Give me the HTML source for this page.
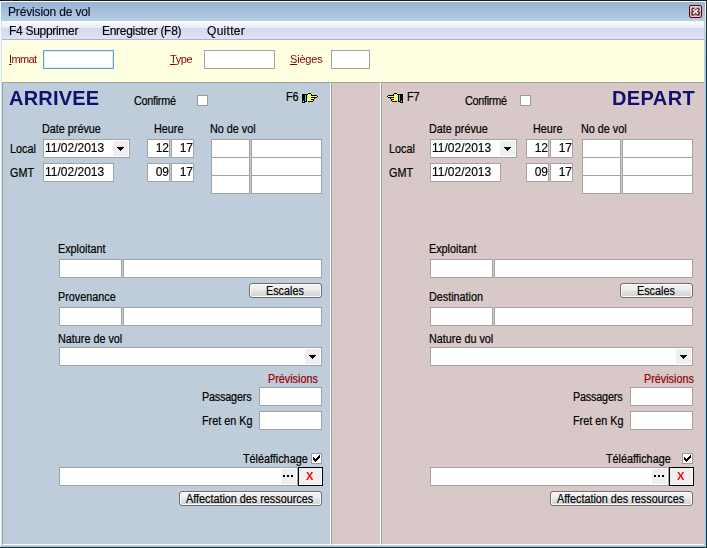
<!DOCTYPE html>
<html><head><meta charset="utf-8">
<style>
*{margin:0;padding:0;box-sizing:border-box}
html,body{width:707px;height:548px;overflow:hidden;background:#fff}
body{position:relative;font-family:"Liberation Sans",sans-serif;font-size:11px;color:#000}
.a{position:absolute}
.t{position:absolute;white-space:nowrap;font-size:11px;line-height:13px;transform:translateZ(0)}
.L{font-size:12px;transform:scaleX(0.9);transform-origin:0 0;-webkit-text-stroke:0.2px currentColor}
.bx{position:absolute;background:#fff;border:1px solid #a3a3a3}
.cb{position:absolute;background:#fff;border:1px solid #9c9c9c;width:11px;height:11px}
.btn{position:absolute;border:1px solid #707070;border-radius:3px;background:linear-gradient(#f4f4f4 0%,#eeeeee 42%,#e0e0e0 58%,#d2d2d2 100%);box-shadow:inset 0 0 0 1px #fcfcfc}
.dd{position:absolute;background:#efefef}
.arr{position:absolute;width:0;height:0;border-left:4px solid transparent;border-right:4px solid transparent;border-top:4px solid #000}
.red{color:#800000}
.u{text-decoration:underline}
</style></head><body>
<div class="a" style="left:0;top:0;width:707px;height:1px;background:#1b1b1b"></div>
<div class="a" style="left:0;top:1px;width:706px;height:1px;background:#ffffff"></div>
<div class="a" style="left:0;top:1px;width:1px;height:546px;background:#f4fbff"></div>
<div class="a" style="left:1px;top:21px;width:1px;height:525px;background:#d4e0ec"></div>
<div class="a" style="left:704px;top:21px;width:1px;height:525px;background:#c4cce4"></div>
<div class="a" style="left:705px;top:2px;width:1px;height:545px;background:linear-gradient(#e8f8ff,#70d8f8 10%,#70d8f8)"></div>
<div class="a" style="left:706px;top:0;width:1px;height:548px;background:#2e2826"></div>
<div class="a" style="left:1px;top:545px;width:704px;height:1px;background:#c4cce4"></div>
<div class="a" style="left:0;top:546px;width:706px;height:1px;background:#70d8f8"></div>
<div class="a" style="left:0;top:547px;width:707px;height:1px;background:#2e2826"></div>
<div class="a" style="left:1px;top:2px;width:704px;height:19px;background:linear-gradient(#97b3d1,#b6cee6)"></div>
<div class="t" style="left:8px;top:6px;font-size:12px;letter-spacing:-0.15px;color:#0a0a20;-webkit-text-stroke:0.15px #0a0a20">Prévision de vol</div>
<div class="a" style="left:689px;top:5px;width:13px;height:13px;border:1px solid #4a0c1c;border-radius:2px;background:linear-gradient(#f4c4b4 0%,#e8a090 45%,#cc4c2c 50%,#d86848 75%,#eca898 100%);box-shadow:inset 0 0 0 1px rgba(255,220,210,0.6)"></div>
<svg class="a" style="left:689px;top:5px" width="13" height="13"><path d="M4.0 4.3 L9.0 8.9 M9.0 4.3 L4.0 8.9" stroke="#2c3444" stroke-width="2.9" stroke-linecap="square"/><path d="M4.0 4.3 L9.0 8.9 M9.0 4.3 L4.0 8.9" stroke="#fff" stroke-width="1.5"/></svg>
<div class="a" style="left:2px;top:21px;width:702px;height:19px;background:linear-gradient(#ffffff 0px,#e8eaf6 7px,#d3d8ee 7px,#dfe3f5 18px);border-bottom:1px solid #b0b4c4"></div>
<div class="t" style="left:9px;top:25px;font-size:12px;letter-spacing:-0.3px;-webkit-text-stroke:0.15px #000">F4 Supprimer</div>
<div class="t" style="left:102px;top:25px;font-size:12px;letter-spacing:-0.3px;-webkit-text-stroke:0.15px #000">Enregistrer (F8)</div>
<div class="t" style="left:207px;top:25px;font-size:12px;letter-spacing:0.3px;-webkit-text-stroke:0.15px #000">Quitter</div>
<div class="a" style="left:2px;top:40px;width:702px;height:42px;background:#ffffe1"></div>
<div class="a" style="left:2px;top:40px;width:702px;height:1px;background:#fafaf2"></div>
<div class="t red" style="left:9px;top:53px;font-size:11px;letter-spacing:-0.6px"><span class="u">I</span>mmat</div>
<div class="bx" style="left:43px;top:50px;width:71px;height:19px;border-color:#6a9acf;box-shadow:inset 0 0 0 1px #d2f0fc"></div>
<div class="t red" style="left:170px;top:53px;font-size:11px;letter-spacing:-0.4px"><span class="u">T</span>ype</div>
<div class="bx" style="left:204px;top:50px;width:71px;height:19px;"></div>
<div class="t red" style="left:290px;top:53px;font-size:11px;letter-spacing:-0.2px"><span class="u">S</span>ièges</div>
<div class="bx" style="left:331px;top:50px;width:39px;height:19px;"></div>
<div class="a" style="left:2px;top:82px;width:329px;height:463px;background:#bfccd9;border-left:1px solid #a0a0a0;border-top:1px solid #a0a0a0;border-right:1px solid #fff;border-bottom:1px solid #fff"></div>
<div class="a" style="left:331px;top:82px;width:50px;height:463px;background:#d8c8c8;border-left:1px solid #a0a0a0;border-top:1px solid #a0a0a0;border-right:1px solid #fff;border-bottom:1px solid #fff"></div>
<div class="a" style="left:381px;top:82px;width:323px;height:463px;background:#d8c8c8;border-left:1px solid #a0a0a0;border-top:1px solid #a0a0a0;border-bottom:1px solid #fff"></div>
<div class="t" style="left:9px;top:86px;font-size:20px;line-height:24px;font-weight:bold;color:#101070;letter-spacing:0.2px">ARRIVEE</div>
<div class="t L" style="left:134px;top:95px;letter-spacing:-0.3px">Confirmé</div>
<div class="cb" style="left:197px;top:95px"></div>
<div class="t L" style="left:286px;top:91px;">F6</div>
<svg class="a" style="left:302px;top:93px" width="16" height="10" shape-rendering="crispEdges"><rect x="6" y="0" width="1" height="1" fill="#000"/><rect x="7" y="0" width="1" height="1" fill="#000"/><rect x="8" y="0" width="1" height="1" fill="#000"/><rect x="0" y="1" width="1" height="1" fill="#000"/><rect x="1" y="1" width="1" height="1" fill="#000"/><rect x="2" y="1" width="1" height="1" fill="#000"/><rect x="3" y="1" width="1" height="1" fill="#000"/><rect x="4" y="1" width="1" height="1" fill="#000"/><rect x="5" y="1" width="1" height="1" fill="#000"/><rect x="6" y="1" width="1" height="1" fill="#ff0"/><rect x="7" y="1" width="1" height="1" fill="#ff0"/><rect x="8" y="1" width="1" height="1" fill="#ff0"/><rect x="9" y="1" width="1" height="1" fill="#000"/><rect x="0" y="2" width="1" height="1" fill="#000"/><rect x="1" y="2" width="1" height="1" fill="#000"/><rect x="2" y="2" width="1" height="1" fill="#000"/><rect x="3" y="2" width="1" height="1" fill="#00e8e8"/><rect x="4" y="2" width="1" height="1" fill="#000"/><rect x="5" y="2" width="1" height="1" fill="#ff0"/><rect x="6" y="2" width="1" height="1" fill="#fff"/><rect x="7" y="2" width="1" height="1" fill="#ff0"/><rect x="8" y="2" width="1" height="1" fill="#fff"/><rect x="9" y="2" width="1" height="1" fill="#000"/><rect x="10" y="2" width="1" height="1" fill="#000"/><rect x="11" y="2" width="1" height="1" fill="#000"/><rect x="12" y="2" width="1" height="1" fill="#000"/><rect x="13" y="2" width="1" height="1" fill="#000"/><rect x="14" y="2" width="1" height="1" fill="#000"/><rect x="0" y="3" width="1" height="1" fill="#000"/><rect x="1" y="3" width="1" height="1" fill="#000"/><rect x="2" y="3" width="1" height="1" fill="#000"/><rect x="3" y="3" width="1" height="1" fill="#00e8e8"/><rect x="4" y="3" width="1" height="1" fill="#000"/><rect x="5" y="3" width="1" height="1" fill="#ff0"/><rect x="6" y="3" width="1" height="1" fill="#ff0"/><rect x="7" y="3" width="1" height="1" fill="#fff"/><rect x="8" y="3" width="1" height="1" fill="#ff0"/><rect x="9" y="3" width="1" height="1" fill="#fff"/><rect x="10" y="3" width="1" height="1" fill="#ff0"/><rect x="11" y="3" width="1" height="1" fill="#fff"/><rect x="12" y="3" width="1" height="1" fill="#ff0"/><rect x="13" y="3" width="1" height="1" fill="#fff"/><rect x="14" y="3" width="1" height="1" fill="#ff0"/><rect x="15" y="3" width="1" height="1" fill="#000"/><rect x="0" y="4" width="1" height="1" fill="#000"/><rect x="1" y="4" width="1" height="1" fill="#000"/><rect x="2" y="4" width="1" height="1" fill="#000"/><rect x="3" y="4" width="1" height="1" fill="#00e8e8"/><rect x="4" y="4" width="1" height="1" fill="#000"/><rect x="5" y="4" width="1" height="1" fill="#ff0"/><rect x="6" y="4" width="1" height="1" fill="#fff"/><rect x="7" y="4" width="1" height="1" fill="#ff0"/><rect x="8" y="4" width="1" height="1" fill="#fff"/><rect x="9" y="4" width="1" height="1" fill="#000"/><rect x="10" y="4" width="1" height="1" fill="#000"/><rect x="11" y="4" width="1" height="1" fill="#000"/><rect x="12" y="4" width="1" height="1" fill="#000"/><rect x="13" y="4" width="1" height="1" fill="#000"/><rect x="14" y="4" width="1" height="1" fill="#000"/><rect x="0" y="5" width="1" height="1" fill="#000"/><rect x="1" y="5" width="1" height="1" fill="#000"/><rect x="2" y="5" width="1" height="1" fill="#000"/><rect x="3" y="5" width="1" height="1" fill="#00e8e8"/><rect x="4" y="5" width="1" height="1" fill="#000"/><rect x="5" y="5" width="1" height="1" fill="#fff"/><rect x="6" y="5" width="1" height="1" fill="#ff0"/><rect x="7" y="5" width="1" height="1" fill="#fff"/><rect x="8" y="5" width="1" height="1" fill="#ff0"/><rect x="9" y="5" width="1" height="1" fill="#fff"/><rect x="10" y="5" width="1" height="1" fill="#ff0"/><rect x="11" y="5" width="1" height="1" fill="#fff"/><rect x="12" y="5" width="1" height="1" fill="#000"/><rect x="0" y="6" width="1" height="1" fill="#000"/><rect x="1" y="6" width="1" height="1" fill="#000"/><rect x="2" y="6" width="1" height="1" fill="#000"/><rect x="3" y="6" width="1" height="1" fill="#00e8e8"/><rect x="4" y="6" width="1" height="1" fill="#000"/><rect x="5" y="6" width="1" height="1" fill="#ff0"/><rect x="6" y="6" width="1" height="1" fill="#fff"/><rect x="7" y="6" width="1" height="1" fill="#ff0"/><rect x="8" y="6" width="1" height="1" fill="#fff"/><rect x="9" y="6" width="1" height="1" fill="#000"/><rect x="10" y="6" width="1" height="1" fill="#000"/><rect x="11" y="6" width="1" height="1" fill="#000"/><rect x="0" y="7" width="1" height="1" fill="#000"/><rect x="1" y="7" width="1" height="1" fill="#000"/><rect x="2" y="7" width="1" height="1" fill="#000"/><rect x="3" y="7" width="1" height="1" fill="#00e8e8"/><rect x="4" y="7" width="1" height="1" fill="#000"/><rect x="5" y="7" width="1" height="1" fill="#fff"/><rect x="6" y="7" width="1" height="1" fill="#ff0"/><rect x="7" y="7" width="1" height="1" fill="#fff"/><rect x="8" y="7" width="1" height="1" fill="#ff0"/><rect x="9" y="7" width="1" height="1" fill="#fff"/><rect x="10" y="7" width="1" height="1" fill="#ff0"/><rect x="11" y="7" width="1" height="1" fill="#000"/><rect x="0" y="8" width="1" height="1" fill="#000"/><rect x="1" y="8" width="1" height="1" fill="#ff0"/><rect x="2" y="8" width="1" height="1" fill="#000"/><rect x="3" y="8" width="1" height="1" fill="#000"/><rect x="4" y="8" width="1" height="1" fill="#000"/><rect x="6" y="8" width="1" height="1" fill="#000"/><rect x="7" y="8" width="1" height="1" fill="#000"/><rect x="8" y="8" width="1" height="1" fill="#000"/><rect x="9" y="8" width="1" height="1" fill="#000"/><rect x="10" y="8" width="1" height="1" fill="#000"/><rect x="0" y="9" width="1" height="1" fill="#000"/><rect x="1" y="9" width="1" height="1" fill="#000"/><rect x="2" y="9" width="1" height="1" fill="#000"/></svg>
<div class="t L" style="left:42px;top:123px;">Date prévue</div>
<div class="t L" style="left:154px;top:123px;">Heure</div>
<div class="t L" style="left:210px;top:123px;">No de vol</div>
<div class="t L" style="left:10px;top:143px;">Local</div>
<div class="t L" style="left:10px;top:167px;">GMT</div>
<div class="bx" style="left:43px;top:139px;width:87px;height:19px;"></div>
<div class="dd" style="left:113px;top:141px;width:15px;height:15px"></div>
<svg class="a" style="left:117px;top:147px" width="7" height="4" shape-rendering="crispEdges"><rect x="0" y="0" width="7" height="1"/><rect x="1" y="1" width="5" height="1"/><rect x="2" y="2" width="3" height="1"/><rect x="3" y="3" width="1" height="1"/></svg>
<div class="t" style="left:45px;top:142px;font-size:12px;-webkit-text-stroke:0.15px #000">11/02/2013</div>
<div class="bx" style="left:43px;top:163px;width:71px;height:19px;"></div>
<div class="t" style="left:45px;top:166px;font-size:12px;-webkit-text-stroke:0.15px #000">11/02/2013</div>
<div class="bx" style="left:147px;top:139px;width:23px;height:19px;"></div>
<div class="bx" style="left:171px;top:139px;width:23px;height:19px;"></div>
<div class="t" style="left:147px;top:142px;width:22px;text-align:right;font-size:12px;-webkit-text-stroke:0.15px #000">12</div>
<div class="t" style="left:171px;top:142px;width:22px;text-align:right;font-size:12px;-webkit-text-stroke:0.15px #000">17</div>
<div class="bx" style="left:147px;top:163px;width:23px;height:19px;"></div>
<div class="bx" style="left:171px;top:163px;width:23px;height:19px;"></div>
<div class="t" style="left:147px;top:166px;width:22px;text-align:right;font-size:12px;-webkit-text-stroke:0.15px #000">09</div>
<div class="t" style="left:171px;top:166px;width:22px;text-align:right;font-size:12px;-webkit-text-stroke:0.15px #000">17</div>
<div class="bx" style="left:211px;top:139px;width:39px;height:19px;"></div>
<div class="bx" style="left:251px;top:139px;width:71px;height:19px;"></div>
<div class="bx" style="left:211px;top:157px;width:39px;height:19px;"></div>
<div class="bx" style="left:251px;top:157px;width:71px;height:19px;"></div>
<div class="bx" style="left:211px;top:175px;width:39px;height:19px;"></div>
<div class="bx" style="left:251px;top:175px;width:71px;height:19px;"></div>
<div class="t L" style="left:58px;top:243px;">Exploitant</div>
<div class="bx" style="left:59px;top:259px;width:63px;height:19px;"></div>
<div class="bx" style="left:123px;top:259px;width:199px;height:19px;"></div>
<div class="btn" style="left:249px;top:283px;width:73px;height:15px"></div>
<div class="t L" style="left:266px;top:285px;">Escales</div>
<div class="t L" style="left:58px;top:291px;">Provenance</div>
<div class="bx" style="left:59px;top:307px;width:63px;height:19px;"></div>
<div class="bx" style="left:123px;top:307px;width:199px;height:19px;"></div>
<div class="t L" style="left:58px;top:333px;">Nature de vol</div>
<div class="bx" style="left:59px;top:347px;width:263px;height:19px;"></div>
<div class="dd" style="left:305px;top:349px;width:15px;height:15px"></div>
<svg class="a" style="left:309px;top:355px" width="7" height="4" shape-rendering="crispEdges"><rect x="0" y="0" width="7" height="1"/><rect x="1" y="1" width="5" height="1"/><rect x="2" y="2" width="3" height="1"/><rect x="3" y="3" width="1" height="1"/></svg>
<div class="t L" style="left:268px;top:373px;color:#960000">Prévisions</div>
<div class="t L" style="left:202px;top:391px;letter-spacing:-0.2px">Passagers</div>
<div class="bx" style="left:259px;top:387px;width:63px;height:19px;"></div>
<div class="t L" style="left:202px;top:415px;">Fret en Kg</div>
<div class="bx" style="left:259px;top:411px;width:63px;height:19px;"></div>
<div class="t L" style="left:243px;top:453px;">Téléaffichage</div>
<div class="cb" style="left:311px;top:453px"></div>
<svg class="a" style="left:311px;top:453px" width="11" height="11" shape-rendering="crispEdges"><rect x="2" y="4" width="1" height="3"/><rect x="3" y="5" width="1" height="3"/><rect x="4" y="6" width="1" height="3"/><rect x="5" y="5" width="1" height="3"/><rect x="6" y="4" width="1" height="3"/><rect x="7" y="3" width="1" height="3"/><rect x="8" y="2" width="1" height="3"/></svg>
<div class="bx" style="left:59px;top:467px;width:239px;height:19px;"></div>
<div class="dd" style="left:281px;top:469px;width:15px;height:15px"></div>
<div class="a" style="left:283px;top:475px;width:2px;height:2px;background:#000"></div>
<div class="a" style="left:287px;top:475px;width:2px;height:2px;background:#000"></div>
<div class="a" style="left:291px;top:475px;width:2px;height:2px;background:#000"></div>
<div class="a" style="left:298px;top:467px;width:25px;height:19px;border:1px solid #000;background:#f0f0f0;box-shadow:inset -1px -1px 0 #fff"></div>
<div class="t" style="left:306px;top:470px;color:#ff0000;font-size:11px;font-weight:bold">X</div>
<div class="btn" style="left:179px;top:491px;width:143px;height:15px"></div>
<div class="t L" style="left:186px;top:493px;">Affectation des ressources</div>
<div class="t" style="left:612px;top:86px;font-size:20px;line-height:24px;font-weight:bold;color:#101070;letter-spacing:0.4px">DEPART</div>
<div class="t L" style="left:465px;top:95px;letter-spacing:-0.3px">Confirmé</div>
<div class="cb" style="left:520px;top:95px"></div>
<div class="t L" style="left:407px;top:91px;">F7</div>
<svg class="a" style="left:387px;top:93px" width="16" height="10" shape-rendering="crispEdges"><rect x="7" y="0" width="1" height="1" fill="#000"/><rect x="8" y="0" width="1" height="1" fill="#000"/><rect x="9" y="0" width="1" height="1" fill="#000"/><rect x="6" y="1" width="1" height="1" fill="#000"/><rect x="7" y="1" width="1" height="1" fill="#ff0"/><rect x="8" y="1" width="1" height="1" fill="#ff0"/><rect x="9" y="1" width="1" height="1" fill="#ff0"/><rect x="10" y="1" width="1" height="1" fill="#000"/><rect x="11" y="1" width="1" height="1" fill="#000"/><rect x="12" y="1" width="1" height="1" fill="#000"/><rect x="13" y="1" width="1" height="1" fill="#000"/><rect x="14" y="1" width="1" height="1" fill="#000"/><rect x="15" y="1" width="1" height="1" fill="#000"/><rect x="1" y="2" width="1" height="1" fill="#000"/><rect x="2" y="2" width="1" height="1" fill="#000"/><rect x="3" y="2" width="1" height="1" fill="#000"/><rect x="4" y="2" width="1" height="1" fill="#000"/><rect x="5" y="2" width="1" height="1" fill="#000"/><rect x="6" y="2" width="1" height="1" fill="#000"/><rect x="7" y="2" width="1" height="1" fill="#ff0"/><rect x="8" y="2" width="1" height="1" fill="#fff"/><rect x="9" y="2" width="1" height="1" fill="#ff0"/><rect x="10" y="2" width="1" height="1" fill="#fff"/><rect x="11" y="2" width="1" height="1" fill="#000"/><rect x="12" y="2" width="1" height="1" fill="#00e8e8"/><rect x="13" y="2" width="1" height="1" fill="#000"/><rect x="14" y="2" width="1" height="1" fill="#000"/><rect x="15" y="2" width="1" height="1" fill="#000"/><rect x="0" y="3" width="1" height="1" fill="#000"/><rect x="1" y="3" width="1" height="1" fill="#fff"/><rect x="2" y="3" width="1" height="1" fill="#ff0"/><rect x="3" y="3" width="1" height="1" fill="#fff"/><rect x="4" y="3" width="1" height="1" fill="#ff0"/><rect x="5" y="3" width="1" height="1" fill="#fff"/><rect x="6" y="3" width="1" height="1" fill="#ff0"/><rect x="7" y="3" width="1" height="1" fill="#fff"/><rect x="8" y="3" width="1" height="1" fill="#ff0"/><rect x="9" y="3" width="1" height="1" fill="#fff"/><rect x="10" y="3" width="1" height="1" fill="#ff0"/><rect x="11" y="3" width="1" height="1" fill="#000"/><rect x="12" y="3" width="1" height="1" fill="#00e8e8"/><rect x="13" y="3" width="1" height="1" fill="#000"/><rect x="14" y="3" width="1" height="1" fill="#000"/><rect x="15" y="3" width="1" height="1" fill="#000"/><rect x="1" y="4" width="1" height="1" fill="#000"/><rect x="2" y="4" width="1" height="1" fill="#000"/><rect x="3" y="4" width="1" height="1" fill="#000"/><rect x="4" y="4" width="1" height="1" fill="#000"/><rect x="5" y="4" width="1" height="1" fill="#000"/><rect x="6" y="4" width="1" height="1" fill="#000"/><rect x="7" y="4" width="1" height="1" fill="#ff0"/><rect x="8" y="4" width="1" height="1" fill="#fff"/><rect x="9" y="4" width="1" height="1" fill="#ff0"/><rect x="10" y="4" width="1" height="1" fill="#fff"/><rect x="11" y="4" width="1" height="1" fill="#000"/><rect x="12" y="4" width="1" height="1" fill="#00e8e8"/><rect x="13" y="4" width="1" height="1" fill="#000"/><rect x="14" y="4" width="1" height="1" fill="#000"/><rect x="15" y="4" width="1" height="1" fill="#000"/><rect x="3" y="5" width="1" height="1" fill="#000"/><rect x="4" y="5" width="1" height="1" fill="#ff0"/><rect x="5" y="5" width="1" height="1" fill="#fff"/><rect x="6" y="5" width="1" height="1" fill="#ff0"/><rect x="7" y="5" width="1" height="1" fill="#fff"/><rect x="8" y="5" width="1" height="1" fill="#ff0"/><rect x="9" y="5" width="1" height="1" fill="#fff"/><rect x="10" y="5" width="1" height="1" fill="#ff0"/><rect x="11" y="5" width="1" height="1" fill="#000"/><rect x="12" y="5" width="1" height="1" fill="#00e8e8"/><rect x="13" y="5" width="1" height="1" fill="#000"/><rect x="14" y="5" width="1" height="1" fill="#000"/><rect x="15" y="5" width="1" height="1" fill="#000"/><rect x="4" y="6" width="1" height="1" fill="#000"/><rect x="5" y="6" width="1" height="1" fill="#000"/><rect x="6" y="6" width="1" height="1" fill="#000"/><rect x="7" y="6" width="1" height="1" fill="#ff0"/><rect x="8" y="6" width="1" height="1" fill="#fff"/><rect x="9" y="6" width="1" height="1" fill="#ff0"/><rect x="10" y="6" width="1" height="1" fill="#fff"/><rect x="11" y="6" width="1" height="1" fill="#000"/><rect x="12" y="6" width="1" height="1" fill="#00e8e8"/><rect x="13" y="6" width="1" height="1" fill="#000"/><rect x="14" y="6" width="1" height="1" fill="#000"/><rect x="15" y="6" width="1" height="1" fill="#000"/><rect x="4" y="7" width="1" height="1" fill="#000"/><rect x="5" y="7" width="1" height="1" fill="#fff"/><rect x="6" y="7" width="1" height="1" fill="#ff0"/><rect x="7" y="7" width="1" height="1" fill="#fff"/><rect x="8" y="7" width="1" height="1" fill="#ff0"/><rect x="9" y="7" width="1" height="1" fill="#fff"/><rect x="10" y="7" width="1" height="1" fill="#ff0"/><rect x="11" y="7" width="1" height="1" fill="#000"/><rect x="12" y="7" width="1" height="1" fill="#00e8e8"/><rect x="13" y="7" width="1" height="1" fill="#000"/><rect x="14" y="7" width="1" height="1" fill="#000"/><rect x="15" y="7" width="1" height="1" fill="#000"/><rect x="5" y="8" width="1" height="1" fill="#000"/><rect x="6" y="8" width="1" height="1" fill="#000"/><rect x="7" y="8" width="1" height="1" fill="#000"/><rect x="8" y="8" width="1" height="1" fill="#000"/><rect x="9" y="8" width="1" height="1" fill="#000"/><rect x="11" y="8" width="1" height="1" fill="#000"/><rect x="12" y="8" width="1" height="1" fill="#000"/><rect x="13" y="8" width="1" height="1" fill="#000"/><rect x="14" y="8" width="1" height="1" fill="#ff0"/><rect x="15" y="8" width="1" height="1" fill="#000"/><rect x="13" y="9" width="1" height="1" fill="#000"/><rect x="14" y="9" width="1" height="1" fill="#000"/><rect x="15" y="9" width="1" height="1" fill="#000"/></svg>
<div class="t L" style="left:429px;top:123px;">Date prévue</div>
<div class="t L" style="left:533px;top:123px;">Heure</div>
<div class="t L" style="left:581px;top:123px;">No de vol</div>
<div class="t L" style="left:389px;top:143px;">Local</div>
<div class="t L" style="left:389px;top:167px;">GMT</div>
<div class="bx" style="left:430px;top:139px;width:87px;height:19px;"></div>
<div class="dd" style="left:500px;top:141px;width:15px;height:15px"></div>
<svg class="a" style="left:504px;top:147px" width="7" height="4" shape-rendering="crispEdges"><rect x="0" y="0" width="7" height="1"/><rect x="1" y="1" width="5" height="1"/><rect x="2" y="2" width="3" height="1"/><rect x="3" y="3" width="1" height="1"/></svg>
<div class="t" style="left:432px;top:142px;font-size:12px;-webkit-text-stroke:0.15px #000">11/02/2013</div>
<div class="bx" style="left:430px;top:163px;width:71px;height:19px;"></div>
<div class="t" style="left:432px;top:166px;font-size:12px;-webkit-text-stroke:0.15px #000">11/02/2013</div>
<div class="bx" style="left:526px;top:139px;width:23px;height:19px;"></div>
<div class="bx" style="left:550px;top:139px;width:23px;height:19px;"></div>
<div class="t" style="left:526px;top:142px;width:22px;text-align:right;font-size:12px;-webkit-text-stroke:0.15px #000">12</div>
<div class="t" style="left:550px;top:142px;width:22px;text-align:right;font-size:12px;-webkit-text-stroke:0.15px #000">17</div>
<div class="bx" style="left:526px;top:163px;width:23px;height:19px;"></div>
<div class="bx" style="left:550px;top:163px;width:23px;height:19px;"></div>
<div class="t" style="left:526px;top:166px;width:22px;text-align:right;font-size:12px;-webkit-text-stroke:0.15px #000">09</div>
<div class="t" style="left:550px;top:166px;width:22px;text-align:right;font-size:12px;-webkit-text-stroke:0.15px #000">17</div>
<div class="bx" style="left:582px;top:139px;width:39px;height:19px;"></div>
<div class="bx" style="left:622px;top:139px;width:71px;height:19px;"></div>
<div class="bx" style="left:582px;top:157px;width:39px;height:19px;"></div>
<div class="bx" style="left:622px;top:157px;width:71px;height:19px;"></div>
<div class="bx" style="left:582px;top:175px;width:39px;height:19px;"></div>
<div class="bx" style="left:622px;top:175px;width:71px;height:19px;"></div>
<div class="t L" style="left:429px;top:243px;">Exploitant</div>
<div class="bx" style="left:430px;top:259px;width:63px;height:19px;"></div>
<div class="bx" style="left:494px;top:259px;width:199px;height:19px;"></div>
<div class="btn" style="left:620px;top:283px;width:73px;height:15px"></div>
<div class="t L" style="left:637px;top:285px;">Escales</div>
<div class="t L" style="left:429px;top:291px;">Destination</div>
<div class="bx" style="left:430px;top:307px;width:63px;height:19px;"></div>
<div class="bx" style="left:494px;top:307px;width:199px;height:19px;"></div>
<div class="t L" style="left:429px;top:333px;">Nature du vol</div>
<div class="bx" style="left:430px;top:347px;width:263px;height:19px;"></div>
<div class="dd" style="left:676px;top:349px;width:15px;height:15px"></div>
<svg class="a" style="left:680px;top:355px" width="7" height="4" shape-rendering="crispEdges"><rect x="0" y="0" width="7" height="1"/><rect x="1" y="1" width="5" height="1"/><rect x="2" y="2" width="3" height="1"/><rect x="3" y="3" width="1" height="1"/></svg>
<div class="t L" style="left:644px;top:373px;color:#960000">Prévisions</div>
<div class="t L" style="left:573px;top:391px;letter-spacing:-0.2px">Passagers</div>
<div class="bx" style="left:630px;top:387px;width:63px;height:19px;"></div>
<div class="t L" style="left:573px;top:415px;">Fret en Kg</div>
<div class="bx" style="left:630px;top:411px;width:63px;height:19px;"></div>
<div class="t L" style="left:606px;top:453px;">Téléaffichage</div>
<div class="cb" style="left:682px;top:453px"></div>
<svg class="a" style="left:682px;top:453px" width="11" height="11" shape-rendering="crispEdges"><rect x="2" y="4" width="1" height="3"/><rect x="3" y="5" width="1" height="3"/><rect x="4" y="6" width="1" height="3"/><rect x="5" y="5" width="1" height="3"/><rect x="6" y="4" width="1" height="3"/><rect x="7" y="3" width="1" height="3"/><rect x="8" y="2" width="1" height="3"/></svg>
<div class="bx" style="left:430px;top:467px;width:239px;height:19px;"></div>
<div class="dd" style="left:652px;top:469px;width:15px;height:15px"></div>
<div class="a" style="left:654px;top:475px;width:2px;height:2px;background:#000"></div>
<div class="a" style="left:658px;top:475px;width:2px;height:2px;background:#000"></div>
<div class="a" style="left:662px;top:475px;width:2px;height:2px;background:#000"></div>
<div class="a" style="left:669px;top:467px;width:25px;height:19px;border:1px solid #000;background:#f0f0f0;box-shadow:inset -1px -1px 0 #fff"></div>
<div class="t" style="left:677px;top:470px;color:#ff0000;font-size:11px;font-weight:bold">X</div>
<div class="btn" style="left:550px;top:491px;width:143px;height:15px"></div>
<div class="t L" style="left:557px;top:493px;">Affectation des ressources</div>
</body></html>
